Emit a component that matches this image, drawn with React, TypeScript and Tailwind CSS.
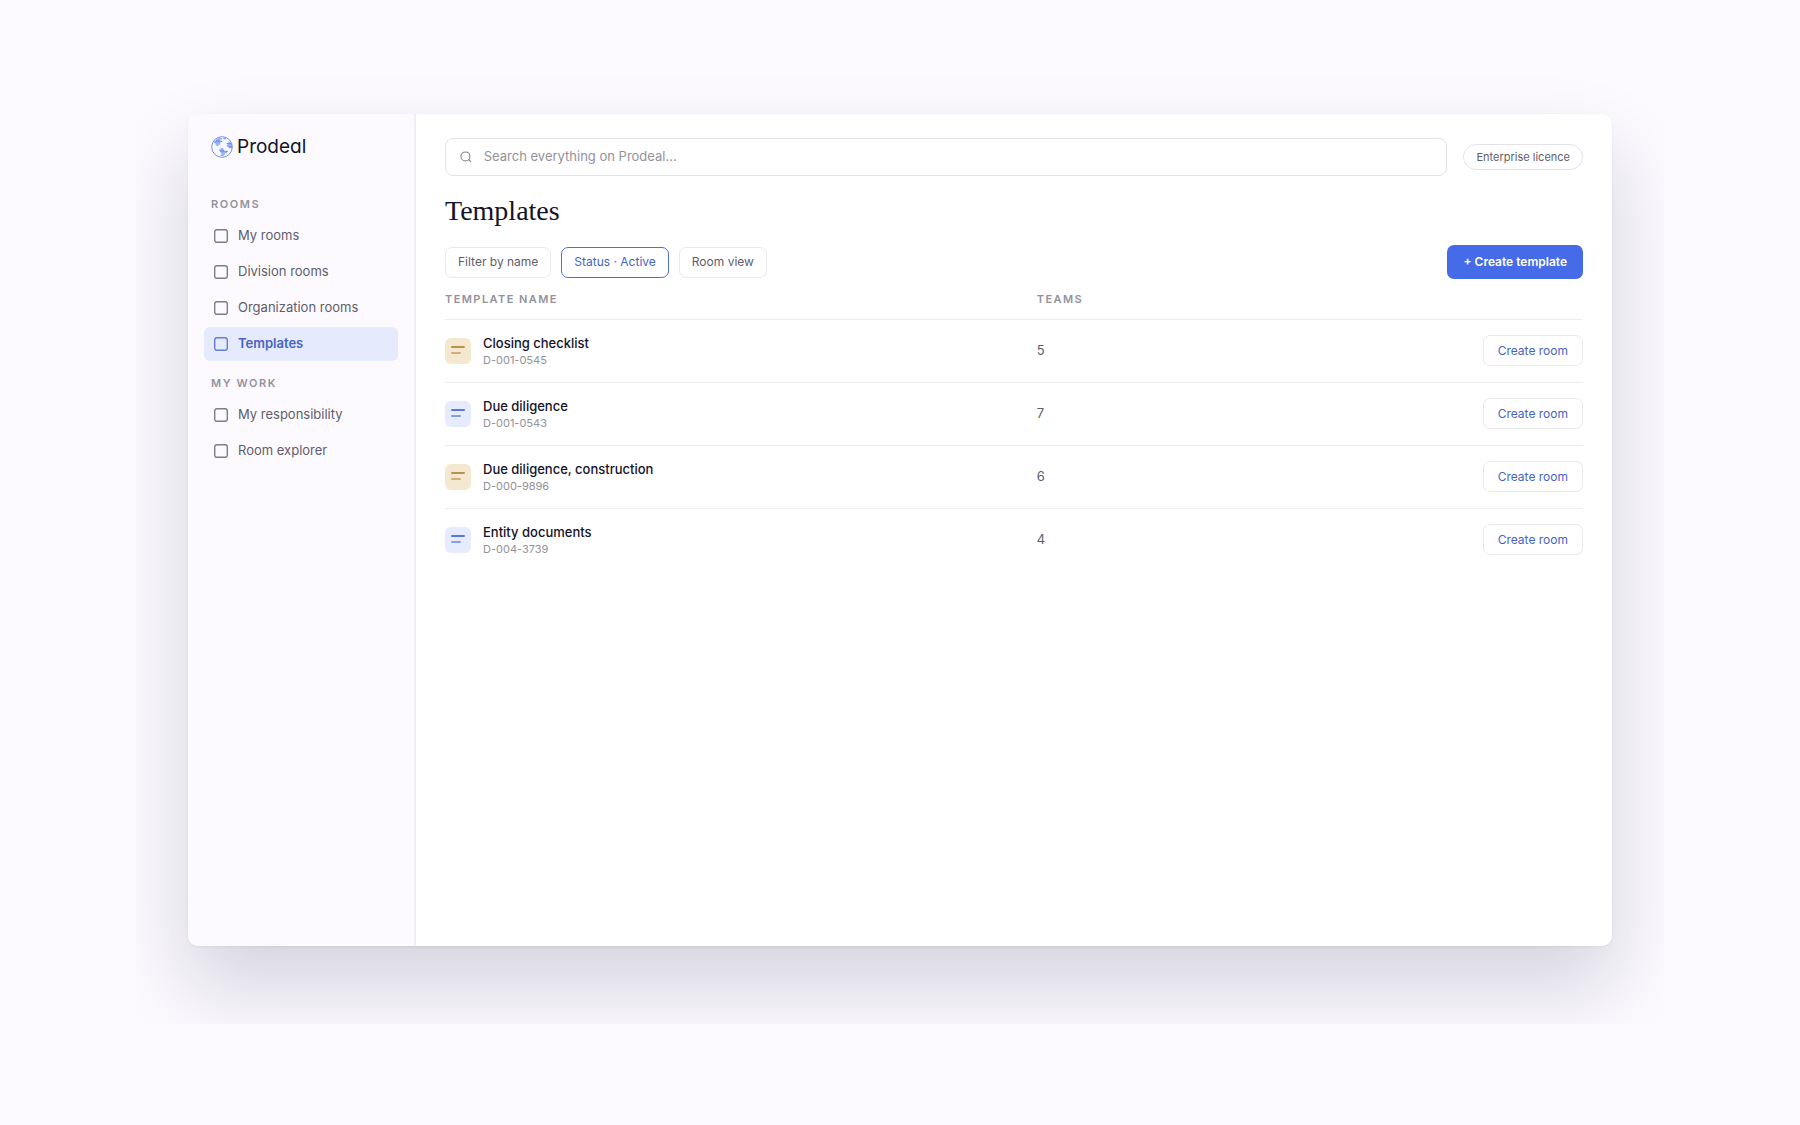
import clsx from "clsx"

type NavItem = { label: string; active?: boolean }

const sections: { title: string; items: NavItem[] }[] = [
  {
    title: "Rooms",
    items: [
      { label: "My rooms" },
      { label: "Division rooms" },
      { label: "Organization rooms" },
      { label: "Templates", active: true },
    ],
  },
  {
    title: "My work",
    items: [{ label: "My responsibility" }, { label: "Room explorer" }],
  },
]

const templates = [
  { name: "Closing checklist", code: "D-001-0545", teams: 5, tone: "sand" },
  { name: "Due diligence", code: "D-001-0543", teams: 7, tone: "blue" },
  { name: "Due diligence, construction", code: "D-000-9896", teams: 6, tone: "sand" },
  { name: "Entity documents", code: "D-004-3739", teams: 4, tone: "blue" },
]

function Logo() {
  return (
    <a href="#" className="flex h-[26px] items-center gap-1 px-[7px] text-[19px] text-[#14122b] [font-feature-settings:'cv11']">
      <svg viewBox="0 0 22 22" className="size-[22px]" fill="none" aria-hidden="true">
        <circle cx="11" cy="11" r="10.3" fill="#f6f8ff" stroke="#7f93d2" strokeWidth="1" />
        {/* continents, drawn as stacked bars */}
        <g stroke="#7d97ea" strokeWidth="1.1">
          <path d="M6.6 2.8h4.6M5 4.1h4.2M3.4 5.4h8M3 6.7h6.4M4.6 8h4.6M5.4 9.3h2.2" />
          <path d="M12.4 2.6h2.4M17.2 6.2h2.4M15.6 7.5h4.8M16.4 8.8h4.6M15.8 10.1h5.4M17.6 11.4h3.4" />
          <path d="M9.6 12.8h2.6M8.2 14.1h4.8M9 15.4h7.8M9.8 16.7h6M10.4 18h3.4M9.8 19.3h3" />
        </g>
      </svg>
      Prodeal
    </a>
  )
}

function SideNav() {
  return (
    <aside className="w-[228px] shrink-0 border-r-2 border-[#f0eef4] bg-[#fcfaff] px-4 pt-5">
      <Logo />
      <nav className="mt-8 flex flex-col gap-2.5">
        {sections.map((section) => (
          <div key={section.title}>
            <h2 className="mb-[3px] px-[7px] text-[11px] leading-6 font-semibold tracking-[0.14em] text-[#93929b] uppercase">
              {section.title}
            </h2>
            <ul className="flex flex-col gap-0.5">
              {section.items.map((item) => (
                <li key={item.label}>
                  <a
                    href="#"
                    aria-current={item.active ? "page" : undefined}
                    className={clsx(
                      "flex h-[34px] items-center gap-2.5 rounded-md px-2.5 text-[13px]",
                      item.active ? "bg-[#e5ebfc] font-semibold text-[#4664c8]" : "text-[#5f5d6b]"
                    )}
                  >
                    <svg viewBox="0 0 14 14" className="size-3.5" fill="none" stroke="currentColor" strokeWidth="1.4" opacity="0.8" aria-hidden="true">
                      <rect x="0.7" y="0.7" width="12.6" height="12.6" rx="2.2" />
                    </svg>
                    {item.label}
                  </a>
                </li>
              ))}
            </ul>
          </div>
        ))}
      </nav>
    </aside>
  )
}

function TemplateIcon({ tone }: { tone: string }) {
  return (
    <svg
      viewBox="0 0 26 26"
      className={clsx("size-[26px] shrink-0 rounded-md", tone === "sand" ? "bg-[#f4e9d0] text-[#b8924a]" : "bg-[#e6ecfd] text-[#5877d8]")}
      stroke="currentColor"
      strokeWidth="2"
      strokeLinecap="round"
      aria-hidden="true"
    >
      <path d="M7 9h12" />
      <path d="M7 15h8" opacity="0.65" />
    </svg>
  )
}

export default function App() {
  return (
    <div className="flex min-h-screen flex-col bg-[#fcfaff] px-[136px] pt-[74px] pb-[101px] font-['Inter',sans-serif]">
      <div className="flex flex-1 flex-col overflow-hidden px-[52px] pt-10 pb-[78px]">
        <div className="flex flex-1 overflow-hidden rounded-[10px] bg-white shadow-[0_1px_3px_rgba(0,0,0,0.06),0_40px_80px_rgba(20,18,50,0.17)]">
          <SideNav />

          <main className="min-w-0 flex-1 px-[29px] pt-6">
            {/* Search */}
            <div className="flex items-center gap-4">
              <label className="flex h-[38px] flex-1 items-center gap-3 rounded-lg border border-[#e3e2e8] px-3.5">
                <svg viewBox="0 0 12 12" className="size-3" fill="none" stroke="#85848e" strokeWidth="1.1" strokeLinecap="round" aria-hidden="true">
                  <circle cx="5.6" cy="5.4" r="4.6" />
                  <path d="M9 8.8l2 2" />
                </svg>
                <input
                  type="search"
                  aria-label="Search"
                  placeholder="Search everything on Prodeal…"
                  className="w-full text-[13px] outline-none placeholder:text-[#93929b]"
                />
              </label>
              <span className="flex h-[26px] items-center rounded-full border border-[#e3e2e8] px-3 text-[11px] text-[#5f5d6b]">
                Enterprise licence
              </span>
            </div>

            <h1 className="mt-4 font-['Liberation_Serif',serif] text-[28px] leading-[38px] text-[#14122b]">Templates</h1>

            {/* Filters */}
            <div className="mt-[15px] flex items-center gap-2.5">
              <button type="button" className="h-[31px] rounded-[7px] border border-[#e9e8ed] px-3 text-xs text-[#5f5d6b]">
                Filter by name
              </button>
              <button type="button" className="h-[31px] rounded-[7px] border border-[#4f6fd8] px-3 text-xs text-[#4664c8]">
                Status · Active
              </button>
              <button type="button" className="h-[31px] rounded-[7px] border border-[#e9e8ed] px-3 text-xs text-[#5f5d6b]">
                Room view
              </button>
              <button type="button" className="ml-auto h-[34px] rounded-[7px] bg-[#456be9] px-4 text-xs font-semibold text-white">
                + Create template
              </button>
            </div>

            <table className="w-full table-fixed text-left">
              <thead>
                <tr className="h-10 border-b border-[#ededf0] text-[11px] text-[#93929b] uppercase">
                  <th className="w-[52%] font-semibold tracking-[0.13em]">Template name</th>
                  <th className="w-[24%] font-semibold tracking-[0.13em]">Teams</th>
                  <th className="w-[24%]" />
                </tr>
              </thead>
              <tbody>
                {templates.map((template) => (
                  <tr key={template.code} className="h-[63px] border-b border-[#ededf0] last:border-b-0">
                    <td>
                      <div className="flex items-center gap-3">
                        <TemplateIcon tone={template.tone} />
                        <div>
                          <div className="text-[13px] leading-[18px] font-medium text-[#14122b]">{template.name}</div>
                          <div className="text-[11px] leading-4 text-[#93929b]">{template.code}</div>
                        </div>
                      </div>
                    </td>
                    <td className="text-[13px] text-[#5f5d6b]">{template.teams}</td>
                    <td className="text-right">
                      <button type="button" className="h-[31px] rounded-[7px] border border-[#e9e8ed] px-3.5 text-xs text-[#4664c8]">
                        Create room
                      </button>
                    </td>
                  </tr>
                ))}
              </tbody>
            </table>
          </main>
        </div>
      </div>
    </div>
  )
}
